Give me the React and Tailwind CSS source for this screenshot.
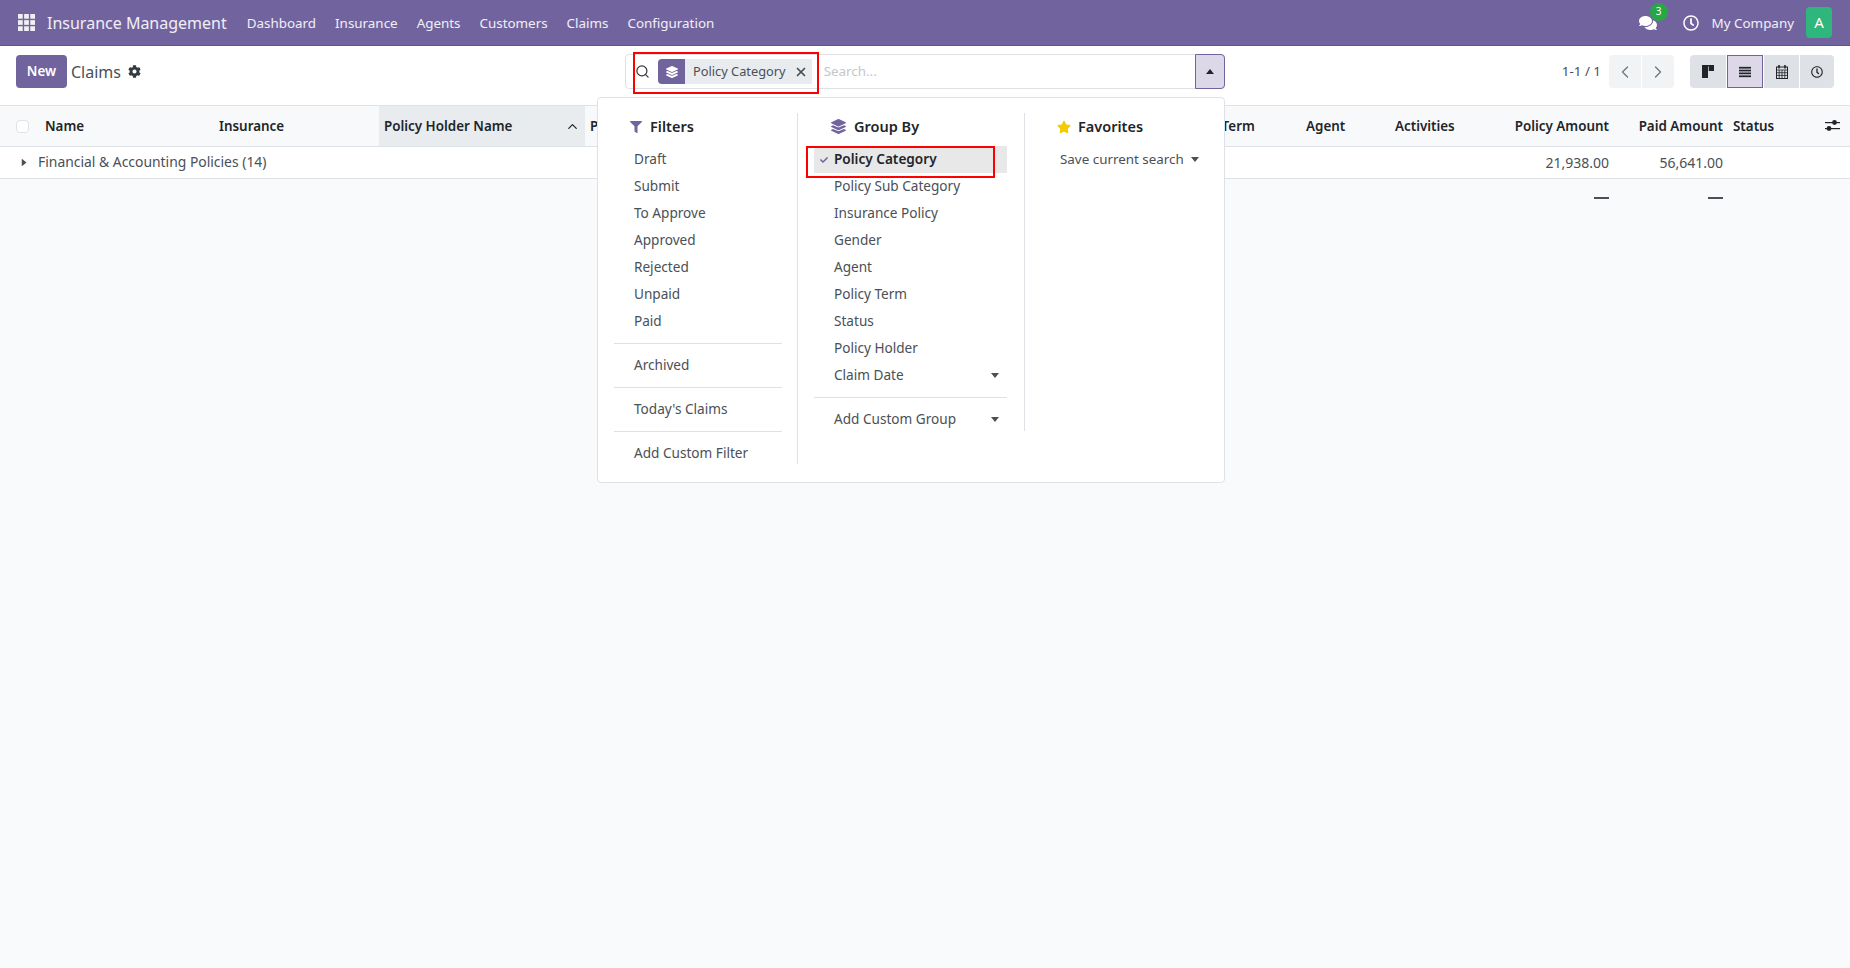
import { FaComments, FaCog, FaFilter, FaLayerGroup, FaStar, FaRegClock, FaCheck } from "react-icons/fa";
import { ChevronLeft, ChevronRight, ChevronUp, Search, X } from "lucide-react";

const menus = ["Dashboard", "Insurance", "Agents", "Customers", "Claims", "Configuration"];
const cols = "grid grid-cols-[38px_176px_165px_206px_590px_126px_89px_120px_104px_114px_1fr]";

function Caret({ up, className = "" }) {
  return (
    <svg viewBox="0 0 8 5" className={"w-2 h-[5px] fill-current " + className}>
      <path d={up ? "M0 5 L4 0 L8 5 Z" : "M0 0 L8 0 L4 5 Z"} />
    </svg>
  );
}

function AppsIcon() {
  const cells = [0, 6.5, 13];
  return (
    <svg viewBox="0 0 18 18" className="w-[17px] h-[17px] fill-white opacity-90">
      {cells.map((y) => cells.map((x) => <rect key={x + "-" + y} x={x} y={y} width="5" height="5" />))}
    </svg>
  );
}

function KanbanIcon() {
  return (
    <svg viewBox="0 0 12 13" className="w-[12px] h-[13px] fill-[#212529]">
      <rect x="0" y="0" width="12" height="1.4" />
      <rect x="0" y="0" width="6" height="13" />
      <rect x="6.7" y="0" width="5.3" height="6" />
    </svg>
  );
}

function ListIcon() {
  return (
    <svg viewBox="0 0 14 12" className="w-[12px] h-[12px] fill-[#212529]">
      <rect y="0" width="14" height="2" />
      <rect y="3.3" width="14" height="2" />
      <rect y="6.6" width="14" height="2" />
      <rect y="10" width="14" height="2" />
    </svg>
  );
}

function CalendarIcon() {
  return (
    <svg viewBox="0 0 12 14" className="w-[12px] h-[14px] stroke-[#212529] fill-none">
      <rect x="0.5" y="2" width="11" height="11.5" />
      <path d="M3 0v3.5M9 0v3.5" strokeWidth="1.6" />
      <path d="M0.5 5h11M0.5 7.7h11M0.5 10.4h11M3.2 5v8.5M6 5v8.5M8.8 5v8.5" strokeWidth="0.8" />
    </svg>
  );
}

function SlidersIcon() {
  return (
    <svg viewBox="0 0 15 13" className="w-[15px] h-[13px] fill-[#212529]">
      <rect y="3" width="15" height="1.2" />
      <rect y="9" width="15" height="1.2" />
      <circle cx="9.5" cy="3.5" r="2.4" />
      <circle cx="4" cy="9.5" r="2.4" />
    </svg>
  );
}

function MenuItem({ children, caret, active }) {
  return (
    <div className={"relative h-[27px] flex items-center pl-[20px] pr-[8px] " + (active ? "bg-[#e8e8e8] font-semibold text-[#212529]" : "text-[#495057]")}>
      {active && <FaCheck className="absolute left-[6px] top-[10px] text-[8px] text-[#71639e]" />}
      <span className="flex-1">{children}</span>
      {caret && <Caret className="text-[#495057]" />}
    </div>
  );
}

function Divider() {
  return <div className="h-px bg-[#dee2e6] my-[8px]" />;
}

function Popover() {
  return (
    <div className="absolute left-[597px] top-[97px] w-[628px] h-[386px] bg-white border border-[#dee2e6] rounded flex pt-[15px] text-[13.6px] z-10">
      <div className="w-[200px] h-[351px] pl-[16px] pr-[15px] border-r border-[#dee2e6] shrink-0">
        <div className="h-[27px] flex items-center gap-[8px] pl-[16px] mb-[6px] font-semibold text-[#212529] text-[14.5px]">
          <FaFilter className="text-[#71639e] text-[12px]" />
          Filters
        </div>
        {["Draft", "Submit", "To Approve", "Approved", "Rejected", "Unpaid", "Paid"].map((f) => (
          <MenuItem key={f}>{f}</MenuItem>
        ))}
        <Divider />
        <MenuItem>Archived</MenuItem>
        <Divider />
        <MenuItem>Today's Claims</MenuItem>
        <Divider />
        <MenuItem>Add Custom Filter</MenuItem>
      </div>
      <div className="w-[227px] h-[318px] pl-[16px] pr-[17px] border-r border-[#dee2e6] shrink-0">
        <div className="h-[27px] flex items-center gap-[8px] pl-[17px] mb-[6px] font-semibold text-[#212529] text-[14.5px]">
          <FaLayerGroup className="text-[#71639e] text-[15px]" />
          Group By
        </div>
        <MenuItem active>Policy Category</MenuItem>
        {["Policy Sub Category", "Insurance Policy", "Gender", "Agent", "Policy Term", "Status", "Policy Holder"].map((g) => (
          <MenuItem key={g}>{g}</MenuItem>
        ))}
        <MenuItem caret>Claim Date</MenuItem>
        <Divider />
        <MenuItem caret>Add Custom Group</MenuItem>
      </div>
      <div className="flex-1 px-[15px]">
        <div className="h-[27px] flex items-center gap-[7px] pl-[17px] mb-[6px] font-semibold text-[#212529] text-[14.5px]">
          <FaStar className="text-[#f3cc00] text-[14px]" />
          Favorites
        </div>
        <div className="h-[27px] flex items-center gap-[7px] pl-[20px] text-[13.4px] text-[#495057]">
          Save current search
          <Caret />
        </div>
      </div>
    </div>
  );
}

export default function App() {
  return (
    <div className="relative min-h-[968px] bg-[#f9fafb] text-[14px] text-[#495057] font-['Noto_Sans',sans-serif] overflow-hidden">
      {/* navbar */}
      <header className="h-[46px] bg-[#71639e] border-b border-[#5f5388] flex items-center text-white">
        <div className="pl-[18px] pr-3 flex items-center"><AppsIcon /></div>
        <span className="text-[16px] text-white/90">Insurance Management</span>
        <nav className="flex gap-[19px] ml-5 pt-px text-[13.4px] text-white/90">
          {menus.map((m) => <span key={m}>{m}</span>)}
        </nav>
        <div className="ml-auto flex items-center pr-[18px]">
          <div className="relative mr-[26px]">
            <FaComments className="text-[18px]" />
            <span className="absolute -top-[11px] left-[11px] w-[18px] h-[18px] rounded-full bg-[#28a745] text-[10px] flex items-center justify-center">3</span>
          </div>
          <FaRegClock className="text-[16px] mr-[13px]" />
          <span className="text-white/90 mr-3 pt-px text-[13.4px]">My Company</span>
          <div className="w-[26px] h-[31px] rounded bg-[#2fb67c] flex items-center justify-center text-[15px]">A</div>
        </div>
      </header>

      {/* control panel */}
      <div className="h-[59px] pb-[8px] bg-white flex items-center relative">
        <button className="ml-4 h-[33px] w-[51px] bg-[#71639e] rounded text-white font-semibold text-[13.4px]">New</button>
        <span className="ml-[4px] text-[16px]">Claims</span>
        <FaCog className="ml-[7px] text-[13px] text-[#343a40]" />

        <div className="absolute left-[625px] top-[8px] w-[600px] h-[35px] border border-[#dee2e6] rounded flex items-center bg-white">
          <Search className="ml-[9px] w-[15px] h-[15px] text-[#343a40]" strokeWidth={2} />
          <div className="ml-[8px] h-[25px] bg-[#e9ecef] rounded-l flex items-center text-[12.8px]">
            <span className="w-[27px] h-[25px] bg-[#71639e] rounded-l flex items-center justify-center">
              <FaLayerGroup className="text-white text-[12px]" />
            </span>
            <span className="ml-2">Policy Category</span>
            <X className="ml-[8px] mr-[4px] w-[14px] h-[14px] text-[#495057]" strokeWidth={3} />
          </div>
          <span className="ml-[12px] text-[#c2c7cd] text-[13.4px]">Search...</span>
          <button className="absolute -right-px -top-px w-[30px] h-[35px] bg-[#dcd8e8] border border-[#71639e] rounded-r flex items-center justify-center text-[#212529]">
            <Caret up />
          </button>
        </div>

        <div className="ml-auto flex items-center pr-4">
          <span className="mr-2 text-[13.4px]">1-1 / 1</span>
          <div className="flex gap-px mr-[16px]">
            <span className="w-[32px] h-[33px] bg-[#f1f3f5] rounded-l flex items-center justify-center"><ChevronLeft className="w-5 h-5 text-[#6c757d]" strokeWidth={1.5} /></span>
            <span className="w-[32px] h-[33px] bg-[#f1f3f5] rounded-r flex items-center justify-center"><ChevronRight className="w-5 h-5 text-[#6c757d]" strokeWidth={1.5} /></span>
          </div>
          <div className="flex gap-px">
            <span className="w-[36px] h-[33px] bg-[#dee2e6] rounded-l flex items-center justify-center"><KanbanIcon /></span>
            <span className="w-[36px] h-[33px] bg-[#dcd8e8] border border-[#71639e] flex items-center justify-center"><ListIcon /></span>
            <span className="w-[35px] h-[33px] bg-[#dee2e6] flex items-center justify-center"><CalendarIcon /></span>
            <span className="w-[34px] h-[33px] bg-[#dee2e6] rounded-r flex items-center justify-center"><FaRegClock className="text-[12px] text-[#212529]" /></span>
          </div>
        </div>
      </div>

      {/* table head */}
      <div className={cols + " h-[42px] bg-[#f8f9fa] border-y border-[#dee2e6] items-center font-semibold text-[13.4px] text-[#212529]"}>
        <div className="pl-4"><div className="w-[13px] h-[13px] rounded-sm border border-[#dee2e6] bg-white" /></div>
        <div className="pl-[7px]">Name</div>
        <div className="pl-[5px]">Insurance</div>
        <div className="h-full bg-[#e9ecef] pl-[5px] pr-[5px] flex items-center justify-between">
          Policy Holder Name
          <ChevronUp className="w-[15px] h-[15px]" strokeWidth={2} />
        </div>
        <div className="pl-[5px]">Policy Category</div>
        <div className="pl-[5px]">Policy Term</div>
        <div className="pl-[5px]">Agent</div>
        <div className="pl-[5px]">Activities</div>
        <div className="pr-[5px] text-right">Policy Amount</div>
        <div className="pr-[5px] text-right">Paid Amount</div>
        <div className="pl-[5px] flex items-center justify-between pr-[10px]">
          Status
          <SlidersIcon />
        </div>
      </div>

      {/* group row */}
      <div className={cols + " h-[32px] bg-white border-b border-[#dee2e6] items-center"}>
        <div className="col-span-8 flex items-center pl-[21px]">
          <Caret className="rotate-[-90deg] -ml-[1px] mr-[10px] text-[#495057]" />
          <span className="text-[13.9px]">Financial &amp; Accounting Policies (14)</span>
        </div>
        <div className="pr-[5px] text-right">21,938.00</div>
        <div className="pr-[5px] text-right">56,641.00</div>
      </div>

      {/* totals */}
      <div className={cols + " h-[38px] items-center"}>
        <div className="col-span-8" />
        <div className="pr-[5px] flex justify-end"><span className="w-[15px] h-[2px] bg-[#495057]" /></div>
        <div className="pr-[5px] flex justify-end"><span className="w-[15px] h-[2px] bg-[#495057]" /></div>
      </div>

      <Popover />

      {/* red annotation boxes */}
      <div className="absolute left-[633px] top-[52px] w-[186px] h-[42px] border-2 border-[#f00] z-20" />
      <div className="absolute left-[806px] top-[146px] w-[189px] h-[32px] border-2 border-[#f00] z-20" />
    </div>
  );
}
